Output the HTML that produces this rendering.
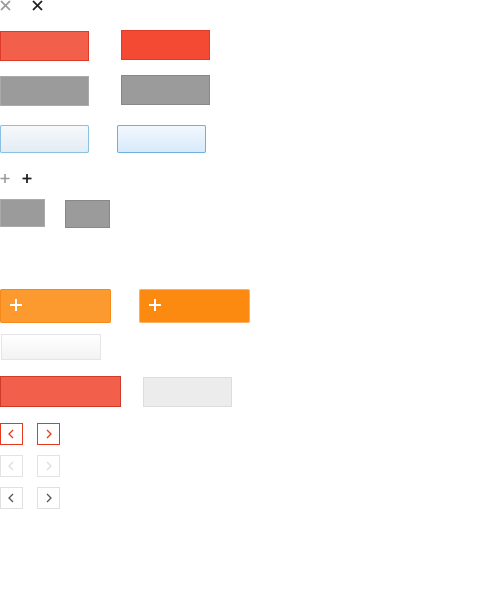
<!DOCTYPE html><html><head><style>
body{margin:0;width:500px;height:600px;background:#fff;position:relative;overflow:hidden;font-family:"Liberation Sans",sans-serif}
.a{position:absolute;box-sizing:border-box}
.x{position:absolute}
</style></head><body>
<svg class="x" style="left:0;top:0" width="12" height="12"><path d="M1 1L10 10M10 1L1 10" stroke="#999" stroke-width="1.6"/></svg>
<svg class="x" style="left:32;top:0;left:32px" width="12" height="12"><path d="M1 1L10 10M10 1L1 10" stroke="#222" stroke-width="1.8"/></svg>
<div class="a" style="left:0;top:31px;width:89px;height:30px;background:#f2604c;border:1px solid #de3a2a"></div>
<div class="a" style="left:121px;top:30px;width:89px;height:30px;background:#f44a33;border:1px solid #e03a28"></div>
<div class="a" style="left:0;top:76px;width:89px;height:30px;background:#9b9b9b;border:1px solid #aaa"></div>
<div class="a" style="left:121px;top:75px;width:89px;height:30px;background:#9b9b9b;border:1px solid #888"></div>
<div class="a" style="left:0;top:125px;width:89px;height:28px;background:linear-gradient(#f7f9fb,#e3ecf4);border:1px solid #8cc0e2;border-radius:2px"></div>
<div class="a" style="left:117px;top:125px;width:89px;height:28px;background:linear-gradient(#f2f8fd,#d8eafa);border:1px solid #6fb0de;border-radius:2px"></div>
<svg class="x" style="left:0;top:173px" width="12" height="12"><path d="M5 1V10M0.5 5.5H9.5" stroke="#999" stroke-width="1.6"/></svg>
<svg class="x" style="left:22px;top:173px" width="12" height="12"><path d="M5 1V10M0.5 5.5H9.5" stroke="#222" stroke-width="1.8"/></svg>
<div class="a" style="left:0;top:199px;width:45px;height:28px;background:#9b9b9b;border:1px solid #aaa"></div>
<div class="a" style="left:65px;top:200px;width:45px;height:28px;background:#9b9b9b;border:1px solid #888"></div>
<div class="a" style="left:0;top:289px;width:111px;height:34px;background:#fc9a30;border:1px solid #f7891a;border-radius:2px"></div>
<div class="a" style="left:139px;top:289px;width:111px;height:34px;background:#fc8a11;border:1px solid #fbb060;border-radius:2px"></div>
<svg class="x" style="left:9px;top:298px" width="14" height="14"><path d="M7 1V13M1 7H13" stroke="#fff" stroke-width="2"/></svg>
<svg class="x" style="left:148px;top:298px" width="14" height="14"><path d="M7 1V13M1 7H13" stroke="#fff" stroke-width="2"/></svg>
<div class="a" style="left:1px;top:334px;width:100px;height:26px;background:linear-gradient(#fff,#f3f3f3);border:1px solid #e5e5e5"></div>
<div class="a" style="left:0;top:376px;width:121px;height:31px;background:#f2604c;border:1px solid #d03a2a"></div>
<div class="a" style="left:143px;top:377px;width:89px;height:30px;background:#ececec;border:1px solid #ddd"></div>
<div class="a" style="left:0;top:423px;width:23px;height:22px;border:1px solid #e8391f"></div>
<div class="a" style="left:37px;top:423px;width:23px;height:22px;border:1px solid #e8391f"></div>
<svg class="x" style="left:0;top:423px" width="23" height="22"><path d="M13 7L9 11L13 15" fill="none" stroke="#e8391f" stroke-width="1.3"/></svg>
<svg class="x" style="left:37px;top:423px" width="23" height="22"><path d="M10 7L14 11L10 15" fill="none" stroke="#e8391f" stroke-width="1.3"/></svg>
<div class="a" style="left:0;top:455px;width:23px;height:22px;border:1px solid #e3e3e3"></div>
<div class="a" style="left:37px;top:455px;width:23px;height:22px;border:1px solid #e3e3e3"></div>
<svg class="x" style="left:0;top:455px" width="23" height="22"><path d="M13 7L9 11L13 15" fill="none" stroke="#ddd" stroke-width="1.3"/></svg>
<svg class="x" style="left:37px;top:455px" width="23" height="22"><path d="M10 7L14 11L10 15" fill="none" stroke="#ddd" stroke-width="1.3"/></svg>
<div class="a" style="left:0;top:487px;width:23px;height:22px;border:1px solid #e0e0e0"></div>
<div class="a" style="left:37px;top:487px;width:23px;height:22px;border:1px solid #e0e0e0"></div>
<svg class="x" style="left:0;top:487px" width="23" height="22"><path d="M13 7L9 11L13 15" fill="none" stroke="#555" stroke-width="1.3"/></svg>
<svg class="x" style="left:37px;top:487px" width="23" height="22"><path d="M10 7L14 11L10 15" fill="none" stroke="#555" stroke-width="1.3"/></svg>
</body></html>
